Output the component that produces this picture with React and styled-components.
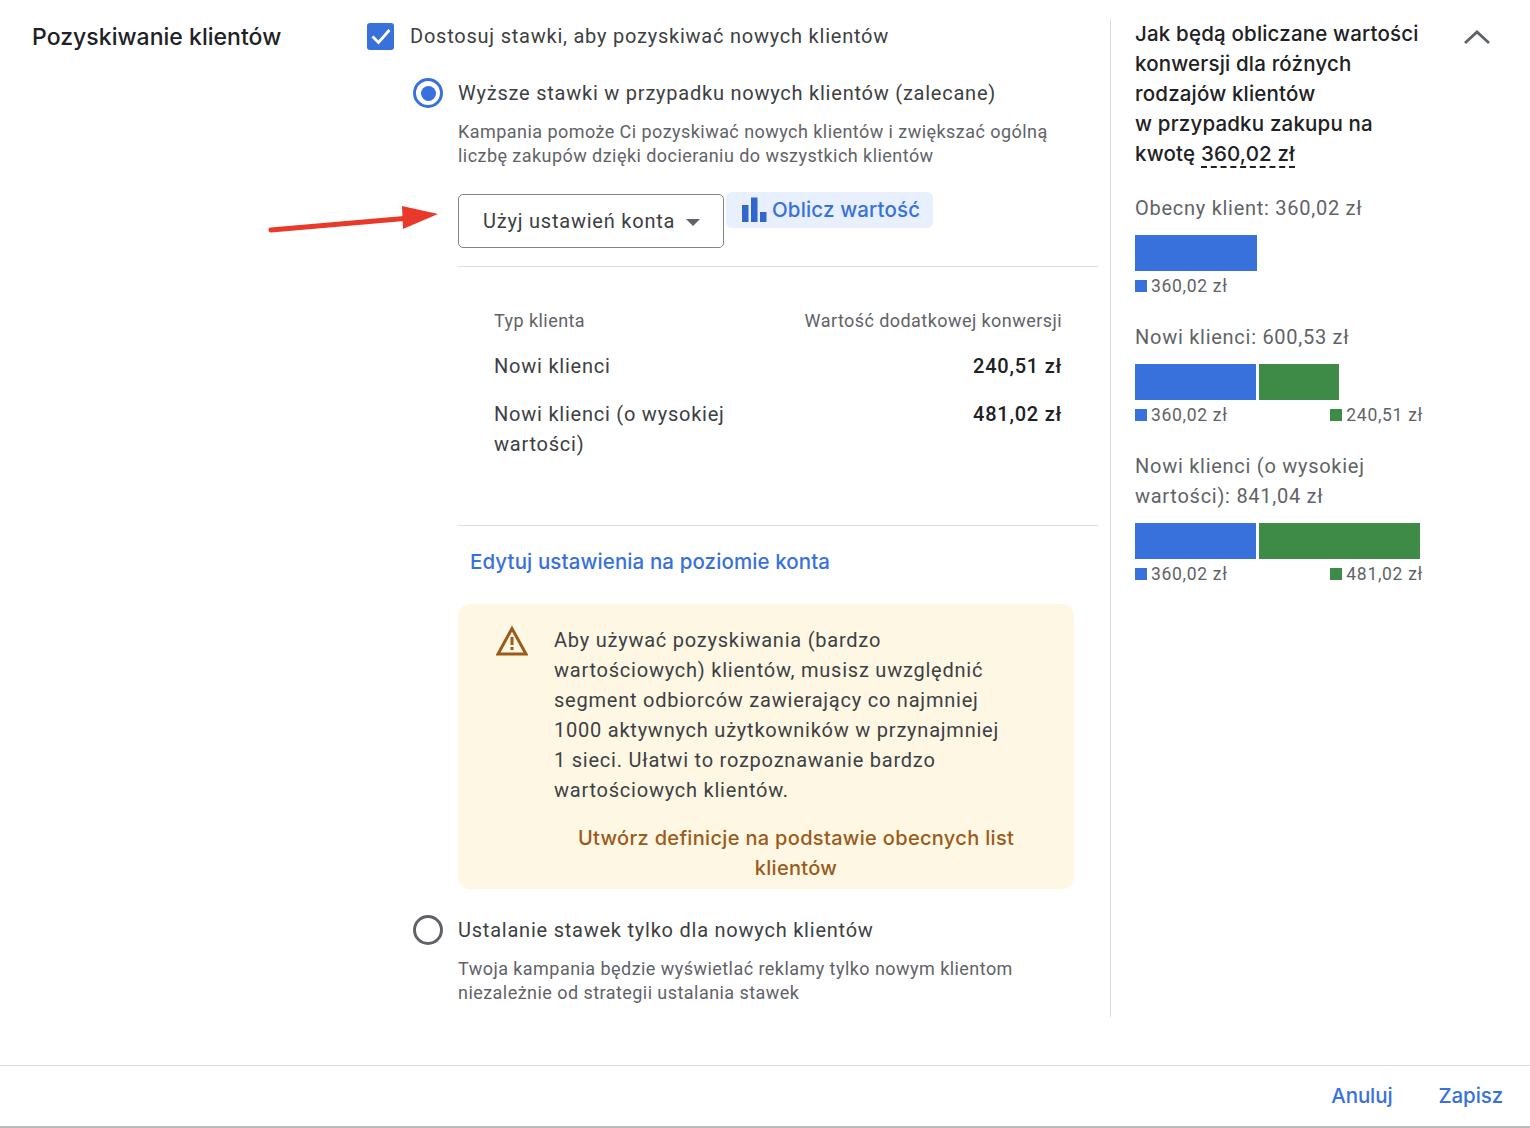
import React from "react";
import styled, { createGlobalStyle } from "styled-components";

const Global = createGlobalStyle`
  html, body { margin: 0; padding: 0; background: #fff; }
  body { font-family: Roboto, "Liberation Sans", sans-serif; color: #3c4043; }
  * { box-sizing: border-box; }
`;

const BLUE = "#3871dc";
const GREEN = "#3d8b47";
const HEAD = `Inter, Roboto, sans-serif`;

const Page = styled.div`
  position: relative;
  width: 1530px;
  height: 1128px;
  display: flex;
  flex-direction: column;
  overflow: hidden;
  background: #fff;
`;
const Body = styled.div`
  display: flex;
  height: 1065px;
  padding-top: 19px;
`;
const SectionLabel = styled.div`
  width: 367px;
  padding: 3px 0 0 32px;
  font: 500 23px/30px ${HEAD};
  letter-spacing: 0.03px;
  color: #202124;
`;
const Main = styled.div`
  width: 743px;
  display: flex;
  flex-direction: column;
`;
const CheckRow = styled.div`
  display: flex;
  align-items: center;
  gap: 16px;
  height: 34px;
`;
const CheckBox = styled.span`
  width: 27px;
  height: 27px;
  border-radius: 3px;
  background: ${BLUE};
  display: flex;
  align-items: center;
  justify-content: center;
`;
const Label = styled.span`
  font-size: 20px;
  line-height: 30px;
  letter-spacing: 0.77px;
  color: #3c4043;
`;
const Nested = styled.div`
  margin-left: 46px;
  display: flex;
  flex-direction: column;
`;
const RadioRow = styled.div`
  display: flex;
  align-items: center;
  gap: 15px;
  height: 30px;
  margin-top: ${(p) => p.$top}px;
`;
const Radio = styled.span`
  width: 30px;
  height: 30px;
  border-radius: 50%;
  border: 3px solid ${(p) => (p.$on ? BLUE : "#5f6368")};
  display: flex;
  align-items: center;
  justify-content: center;
  &::after {
    content: "";
    display: ${(p) => (p.$on ? "block" : "none")};
    width: 15px;
    height: 15px;
    border-radius: 50%;
    background: ${BLUE};
  }
`;
const Indented = styled.div`
  margin-left: 45px;
  width: 640px;
  display: flex;
  flex-direction: column;
`;
const Desc = styled.p`
  margin: 12px 0 0;
  font-size: 18px;
  line-height: 24px;
  letter-spacing: 0.45px;
  color: #5f6368;
`;
const Controls = styled.div`
  display: flex;
  align-items: flex-start;
  margin-top: 24px;
  gap: 2px;
`;
const Select = styled.div`
  width: 266px;
  height: 54px;
  margin-top: 2px;
  border: 1px solid #80868b;
  border-radius: 5px;
  padding-left: 24px;
  display: flex;
  align-items: center;
  gap: 11px;
  font-size: 20px;
  letter-spacing: 0.78px;
  color: #3c4043;
  &::after {
    content: "";
    border-left: 7px solid transparent;
    border-right: 7px solid transparent;
    border-top: 7px solid #5f6368;
    margin-top: 2px;
  }
`;
const Chip = styled.div`
  width: 207px;
  height: 36px;
  background: #e8f0fe;
  border-radius: 6px;
  padding-left: 15px;
  display: flex;
  align-items: center;
  gap: 5px;
  font: 500 20.5px/30px ${HEAD};
  letter-spacing: 0.15px;
  color: ${BLUE};
`;
const Divider = styled.div`
  height: 1px;
  background: #dadce0;
  margin-top: ${(p) => p.$top}px;
`;
const Table = styled.div`
  padding: 39px 36px 0 36px;
  display: flex;
  flex-direction: column;
  height: 258px;
`;
const HeadRow = styled.div`
  display: flex;
  justify-content: space-between;
  font-size: 18px;
  line-height: 30px;
  letter-spacing: 0.44px;
  color: #5f6368;
`;
const DataRow = styled.div`
  display: flex;
  justify-content: space-between;
  margin-top: ${(p) => p.$top}px;
`;
const RowName = styled.div`
  width: 270px;
  font-size: 20px;
  line-height: 30px;
  letter-spacing: 0.77px;
  color: #3c4043;
`;
const RowValue = styled.div`
  font-size: 20px;
  line-height: 30px;
  font-weight: 500;
  letter-spacing: 0.75px;
  color: #202124;
`;
const EditLink = styled.a`
  display: block;
  margin: 21px 0 0 12px;
  font: 500 20.5px/30px ${HEAD};
  letter-spacing: 0.1px;
  color: ${BLUE};
`;
const Warning = styled.div`
  width: 616px;
  height: 285px;
  margin-top: 27px;
  background: #fef7e4;
  border-radius: 12px;
  padding: 21px 24px 0 38px;
  display: flex;
  flex-direction: column;
`;
const WarnRow = styled.div`
  display: flex;
  gap: 26px;
`;
const WarnText = styled.div`
  width: 450px;
  font-size: 20px;
  line-height: 30px;
  letter-spacing: 0.77px;
  color: #3c4043;
`;
const WarnLink = styled.a`
  margin: 18px 0 0 46px;
  text-align: center;
  padding: 0 10px;
  font: 500 20px/30px ${HEAD};
  letter-spacing: 0.32px;
  color: #9a5b1b;
`;
const Side = styled.aside`
  width: 311px;
  height: 998px;
  border-left: 1px solid #dadce0;
  padding-left: 24px;
  position: relative;
`;
const SideTitle = styled.div`
  width: 288px;
  font: 500 20.5px/30px ${HEAD};
  letter-spacing: 0.18px;
  color: #202124;
`;
const Dashed = styled.span`
  border-bottom: 2px dashed #202124;
`;
const Collapse = styled.span`
  position: absolute;
  left: 351px;
  top: 8px;
`;
const Group = styled.div`
  margin-top: ${(p) => p.$top}px;
  width: 288px;
`;
const GroupLabel = styled.div`
  font-size: 20px;
  line-height: 30px;
  letter-spacing: 0.73px;
  color: #5f6368;
  width: 270px;
`;
const Bars = styled.div`
  display: flex;
  gap: 3px;
  margin-top: 12px;
`;
const Bar = styled.div`
  height: 36px;
  background: ${(p) => p.$color};
`;
const Legend = styled.div`
  display: flex;
  justify-content: space-between;
  margin-top: 3px;
  height: 24px;
`;
const LegendItem = styled.span`
  display: flex;
  align-items: center;
  gap: 4px;
  font-size: 17.5px;
  letter-spacing: 0.7px;
  color: #5f6368;
  &::before {
    content: "";
    width: 12px;
    height: 12px;
    background: ${(p) => p.$color};
  }
`;
const Footer = styled.footer`
  flex: 1;
  border-top: 1px solid #dadce0;
  border-bottom: 2px solid #b8babd;
  display: flex;
  justify-content: flex-end;
  align-items: center;
  gap: 46px;
  padding: 0 27px 0 0;
`;
const Action = styled.a`
  font: 500 20.5px/30px ${HEAD};
  letter-spacing: -0.1px;
  color: ${BLUE};
`;
const Annotation = styled.svg`
  position: absolute;
  left: 260px;
  top: 195px;
`;

export default function App() {
  return (
    <Page>
      <Global />
      <Body>
        <SectionLabel>Pozyskiwanie klientów</SectionLabel>
        <Main>
          <CheckRow>
            <CheckBox>
              <svg width="22" height="22" viewBox="0 0 22 22"><path d="M2.500 11.500l6 6 11-12.500" fill="none" stroke="#fff" strokeWidth="2.800" /></svg>
            </CheckBox>
            <Label>Dostosuj stawki, aby pozyskiwać nowych klientów</Label>
          </CheckRow>
          <Nested>
            <RadioRow $top={25}>
              <Radio $on />
              <Label>Wyższe stawki w przypadku nowych klientów (zalecane)</Label>
            </RadioRow>
            <Indented>
              <Desc>Kampania pomoże Ci pozyskiwać nowych klientów i zwiększać ogólną liczbę zakupów dzięki docieraniu do wszystkich klientów</Desc>
              <Controls>
                <Select>Użyj ustawień konta</Select>
                <Chip>
                  <svg width="26" height="26" viewBox="0 0 26 26"><path d="M1 8h6.500v17H1zM10 0.500h6.500V25H10zM19 15h6.500v10H19z" fill="#3366cc" /></svg>
                  Oblicz wartość
                </Chip>
              </Controls>
              <Divider $top={18} />
              <Table>
                <HeadRow><span>Typ klienta</span><span>Wartość dodatkowej konwersji</span></HeadRow>
                <DataRow $top={15}><RowName>Nowi klienci</RowName><RowValue>240,51 zł</RowValue></DataRow>
                <DataRow $top={18}><RowName>Nowi klienci (o wysokiej wartości)</RowName><RowValue>481,02 zł</RowValue></DataRow>
              </Table>
              <Divider $top={0} />
              <EditLink>Edytuj ustawienia na poziomie konta</EditLink>
              <Warning>
                <WarnRow>
                  <svg width="32" height="32" viewBox="0 0 32 32" style={{ flexShrink: 0 }}><path d="M16 3.500 2 29h28z" fill="none" stroke="#9a5b1b" strokeWidth="3" /><path d="M14.500 12h3v8h-3zM14.500 22h3v3h-3z" fill="#9a5b1b" /></svg>
                  <WarnText>Aby używać pozyskiwania (bardzo wartościowych) klientów, musisz uwzględnić segment odbiorców zawierający co najmniej 1000 aktywnych użytkowników w przynajmniej 1 sieci. Ułatwi to rozpoznawanie bardzo wartościowych klientów.</WarnText>
                </WarnRow>
                <WarnLink>Utwórz definicje na podstawie obecnych list klientów</WarnLink>
              </Warning>
            </Indented>
            <RadioRow $top={26}>
              <Radio />
              <Label>Ustalanie stawek tylko dla nowych klientów</Label>
            </RadioRow>
            <Indented>
              <Desc>Twoja kampania będzie wyświetlać reklamy tylko nowym klientom niezależnie od strategii ustalania stawek</Desc>
            </Indented>
          </Nested>
        </Main>
        <Side>
          <SideTitle>Jak będą obliczane wartości konwersji dla różnych rodzajów klientów<br />w przypadku zakupu na kwotę <Dashed>360,02 zł</Dashed></SideTitle>
          <Collapse>
            <svg width="30" height="20" viewBox="0 0 30 20"><path d="M3 16 15 5l12 11" fill="none" stroke="#5f6368" strokeWidth="2.800" /></svg>
          </Collapse>
          <Group $top={24}>
            <GroupLabel>Obecny klient: 360,02 zł</GroupLabel>
            <Bars><Bar $color={BLUE} style={{ width: 122 }} /></Bars>
            <Legend><LegendItem $color={BLUE}>360,02 zł</LegendItem></Legend>
          </Group>
          <Group $top={24}>
            <GroupLabel>Nowi klienci: 600,53 zł</GroupLabel>
            <Bars><Bar $color={BLUE} style={{ width: 121 }} /><Bar $color={GREEN} style={{ width: 80 }} /></Bars>
            <Legend><LegendItem $color={BLUE}>360,02 zł</LegendItem><LegendItem $color={GREEN}>240,51 zł</LegendItem></Legend>
          </Group>
          <Group $top={24}>
            <GroupLabel>Nowi klienci (o wysokiej wartości): 841,04 zł</GroupLabel>
            <Bars><Bar $color={BLUE} style={{ width: 121 }} /><Bar $color={GREEN} style={{ width: 161 }} /></Bars>
            <Legend><LegendItem $color={BLUE}>360,02 zł</LegendItem><LegendItem $color={GREEN}>481,02 zł</LegendItem></Legend>
          </Group>
        </Side>
      </Body>
      <Footer>
        <Action>Anuluj</Action>
        <Action>Zapisz</Action>
      </Footer>
      <Annotation width="185" height="45" viewBox="0 0 185 45">
        <path d="M11 35 150 23" stroke="#e8392a" strokeWidth="5" strokeLinecap="round" />
        <path d="M142 11 178 19 143 34z" fill="#e8392a" />
      </Annotation>
    </Page>
  );
}
